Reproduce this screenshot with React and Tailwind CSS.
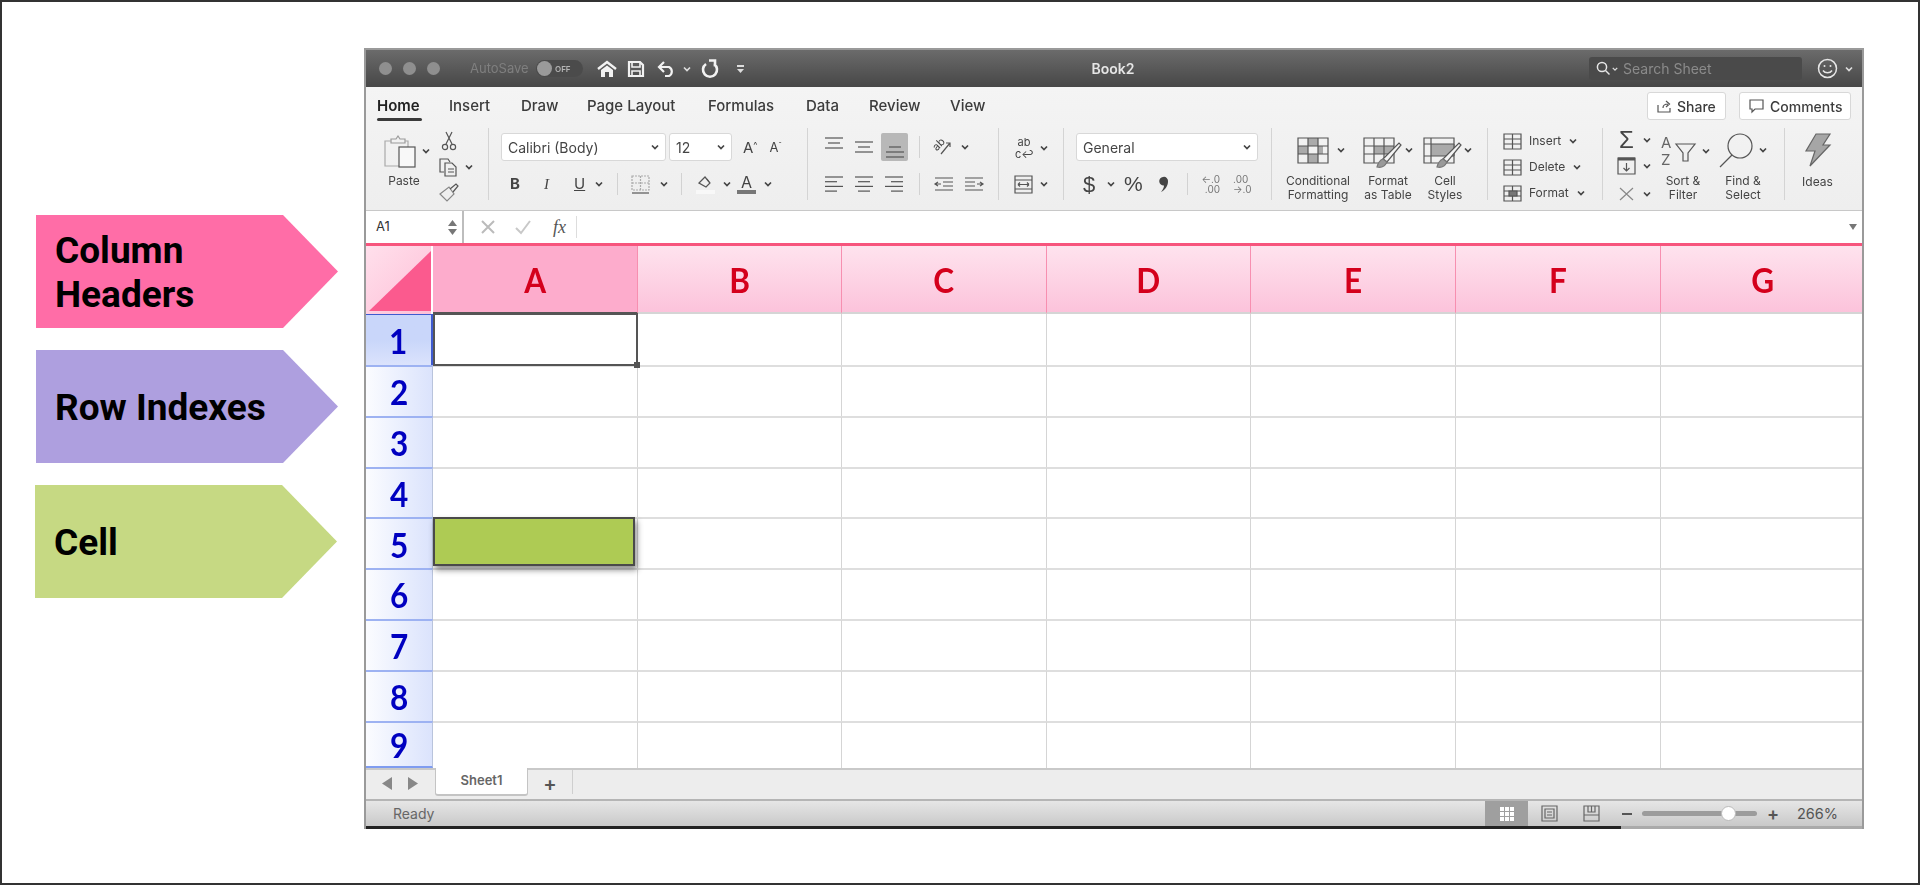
const I = ({ w, h, vb, children, className = "", sw = 1.2, c = "#555" }) => (
  <svg width={w} height={h} viewBox={vb || `0 0 ${w} ${h}`} fill="none" stroke={c} strokeWidth={sw} className={"shrink-0 overflow-visible " + className}>{children}</svg>
);
const Chev = ({ className = "", c = "#444" }) => (
  <I w={8} h={6} sw={1.7} c={c} className={className}><path d="M1 1.5 4 4.5 7 1.5" /></I>
);
const Sep = ({ className = "" }) => <div className={"w-px h-[22px] bg-[#d2d2d2] shrink-0 " + className} />;
const GroupSep = () => <div className="w-px h-[72px] mt-[5px] bg-[#d4d4d4] shrink-0 self-start" />;
const Lines = ({ ys, xs }) => (
  <I w={18} h={22}>{ys.map((y, i) => <path key={i} d={`M${xs[i][0]} ${y}H${xs[i][1]}`} />)}</I>
);
const Small = ({ children, className = "" }) => (
  <div className={"text-center text-[12px] leading-[14px] text-[#444] font-['Inter','Liberation_Sans',sans-serif] whitespace-nowrap " + className}>{children}</div>
);

const Arrow = ({ bg, children, className = "" }) => (
  <div className={"w-[302px] h-[113px] flex items-center pl-[19px] pt-[2px] text-[37px] leading-[44px] font-bold text-black font-['Roboto',sans-serif] [clip-path:polygon(0_0,247px_0,100%_50%,247px_100%,0_100%)] " + bg + " " + className}>
    <div>{children}</div>
  </div>
);

const COLS = ["A", "B", "C", "D", "E", "F", "G"];
const ROWS = [1, 2, 3, 4, 5, 6, 7, 8, 9];

function TitleBar() {
  return (
    <div className="h-[37px] bg-gradient-to-b from-[#6b6b6b] to-[#474747] flex items-center relative font-['Inter','Liberation_Sans',sans-serif] shrink-0">
      <div className="flex gap-[11px] ml-[13px]">
        <div className="w-[13px] h-[13px] rounded-full bg-[#8f8f8f]" />
        <div className="w-[13px] h-[13px] rounded-full bg-[#8f8f8f]" />
        <div className="w-[13px] h-[13px] rounded-full bg-[#8f8f8f]" />
      </div>
      <span className="ml-[30px] text-[13px] text-[#7f7f7f] w-[66px]">AutoSave</span>
      <div className="w-[47px] h-[17px] rounded-full bg-[#4b4b4b] flex items-center">
        <div className="w-[15px] h-[15px] rounded-full bg-[#9a9a9a] ml-px" />
        <span className="text-[8px] font-semibold text-[#b5b5b5] ml-[3px]">OFF</span>
      </div>
      <I w={22} h={18} c="#f2f2f2" sw={2.4} className="ml-[13px]"><path d="M2 9 11 2l9 7" /><path d="M5 10 11 5.500 17 10v7h-4v-5H9v5H5z" fill="#f2f2f2" stroke="none" /></I>
      <I w={18} h={18} c="#f2f2f2" sw={2.2} className="ml-[9px]"><path d="M2 2h11l3 3v11H2z" /><path d="M5 2v5h8V2M5 16v-5h8v5" strokeWidth="1.6" /></I>
      <I w={19} h={17} c="#f2f2f2" sw={2.2} className="ml-[12px]"><path d="M7 2 2 7l5 5M2 7h10a5 5 0 0 1 0 9H8" /></I>
      <Chev c="#ddd" className="ml-[7px]" />
      <I w={19} h={19} c="#f2f2f2" sw={2.6} className="ml-[9px]"><path d="M6 5a7 7 0 1 0 8 0M9 1.500h6v6" /></I>
      <div className="ml-[18px] flex flex-col items-center gap-[2px]">
        <div className="w-[7px] h-[2px] bg-[#ddd]" />
        <I w={7} h={4} c="#ddd" sw={0}><path d="M0 0h7L3.500 4z" fill="#ddd" /></I>
      </div>
      <span className="absolute left-[724px] w-[46px] text-center text-[14px] font-semibold text-[#e6e6e6]">Book2</span>
      <div className="ml-auto flex items-center mr-[9px]">
        <div className="w-[213px] h-[23px] rounded-[3px] bg-[#4a4a4a] flex items-center pl-[7px]">
          <I w={15} h={15} c="#e6e6e6" sw={1.5}><circle cx="6" cy="6" r="4.600" /><path d="m9.500 9.500 4 4" /></I>
          <Chev c="#ddd" className="scale-75" />
          <span className="ml-[4px] text-[14px] text-[#8b8b8b]">Search Sheet</span>
        </div>
        <I w={21} h={21} c="#e6e6e6" sw={1.5} className="ml-[15px]"><circle cx="10.500" cy="10.500" r="9" /><circle cx="7.500" cy="8" r="1" fill="#e6e6e6" stroke="none" /><circle cx="13.500" cy="8" r="1" fill="#e6e6e6" stroke="none" /><path d="M6 12.500c2 3 7 3 9 0" /></I>
        <Chev c="#ddd" className="ml-[7px]" />
      </div>
    </div>
  );
}

function Tabs() {
  const tabs = [["Home", "ml-[11px] w-[45px] font-semibold text-[#222]"], ["Insert", "ml-[27px] w-[49px]"], ["Draw", "ml-[23px] w-[40px]"], ["Page Layout", "ml-[26px] w-[95px]"], ["Formulas", "ml-[26px] w-[73px]"], ["Data", "ml-[25px] w-[38px]"], ["Review", "ml-[25px] w-[57px]"], ["View", "ml-[24px] w-[40px]"]];
  return (
    <div className="h-[36px] flex items-start relative font-['Inter','Liberation_Sans',sans-serif] text-[15px] font-medium text-[#3c3c3c]">
      {tabs.map(([t, c], i) => (
        <div key={t} className={"flex flex-col shrink-0 " + c}>
          <span className="mt-[9px] leading-[20px] whitespace-nowrap">{t}</span>
          {i === 0 && <div className="h-[3px] bg-[#3a3a3a] rounded-full mt-[2px]" />}
        </div>
      ))}
      <div className="ml-auto flex gap-[13px] mt-[5px] mr-[11px] text-[14px]">
        <div className="w-[79px] h-[28px] bg-white border border-[#d8d8d8] rounded-[3px] flex items-center pl-[9px] gap-[6px]">
          <I w={14} h={14}><path d="M1 6v7h12V9M6 9c0-3 2-4 5-4M9 2l3.500 3L9 8" /></I>
          <span>Share</span>
        </div>
        <div className="w-[112px] h-[28px] bg-white border border-[#d8d8d8] rounded-[3px] flex items-center pl-[9px] gap-[6px]">
          <I w={15} h={14}><path d="M1 1h13v9H6l-3 3v-3H1z" /></I>
          <span>Comments</span>
        </div>
      </div>
    </div>
  );
}

const Brush = () => (
  <g>
    <path d="M20 22 36 6l2 2-14 17z" fill="#f4f4f4" />
    <path d="M14 30c1-4 3-7 6-8l4 3c-2 4-6 6-10 5z" fill="#999" stroke="#777" />
  </g>
);

function Ribbon() {
  return (
    <div className="h-[87px] flex items-start font-['Inter','Liberation_Sans',sans-serif] text-[#444]">
      {/* Clipboard */}
      <div className="w-[122px] h-[75px] shrink-0 flex">
        <div className="ml-[18px] w-[52px] flex flex-col">
          <div className="flex items-center mt-[10px]">
            <I w={32} h={36}><path d="M7 6h5l2-3 2 3h5v4H7z" stroke="#9a9a9a" /><path d="M7 8H1v25h14" stroke="#aaa" /><path d="M21 8h3v6" stroke="#aaa" /><rect x="15" y="14" width="16" height="20" fill="#f8f8f8" stroke="#555" /></I>
            <Chev className="ml-[6px]" />
          </div>
          <Small className="w-[40px] mt-[5px]">Paste</Small>
        </div>
        <div className="flex flex-col mt-[8px] ml-[3px]">
          <I w={16} h={20} className="ml-[2px]"><path d="M11 1 5 13M5 1l6 12" /><circle cx="4" cy="16" r="2.600" /><circle cx="12" cy="16" r="2.600" /></I>
          <div className="flex items-center mt-[6px]">
            <I w={20} h={20}><path d="M5 15H1V2h8l2 3" /><path d="M6 6h7l4 4v9H6z" /><path d="M9 12h6M9 15h6" /></I>
            <Chev className="ml-[6px]" />
          </div>
          <I w={20} h={19} className="mt-[6px]"><path d="M1 11 10 4l5 7-7 7z" stroke="#888" /><path d="m11 6 6-5 2 2-5 6" /></I>
        </div>
      </div>
      <GroupSep />
      {/* Font */}
      <div className="w-[318px] shrink-0 flex flex-col">
        <div className="flex items-center mt-[10px]">
          <div className="ml-[12px] w-[165px] h-[28px] bg-white border border-[#d8d8d8] rounded-[3px] flex items-center justify-between px-[6px] text-[14px]"><span>Calibri (Body)</span><Chev /></div>
          <div className="ml-[3px] w-[63px] h-[28px] bg-white border border-[#d8d8d8] rounded-[3px] flex items-center justify-between px-[6px] text-[14px]"><span>12</span><Chev /></div>
          <span className="ml-[11px] text-[15px] leading-none">A<sup className="text-[9px]">^</sup></span>
          <span className="ml-[12px] text-[13px] leading-none">A<sup className="text-[8px]">ˇ</sup></span>
        </div>
        <div className="flex items-center mt-[13px] h-[20px] text-[15px]">
          <span className="ml-[21px] font-bold w-[12px]">B</span>
          <span className="ml-[22px] italic font-['Liberation_Serif',serif] w-[8px]">I</span>
          <span className="ml-[22px] underline w-[12px]">U</span>
          <Chev className="ml-[9px]" />
          <Sep className="ml-[14px]" />
          <I w={19} h={19} className="ml-[13px]" c="#aaa"><path d="M1 1h17v14H1zM9.500 1v14M1 8h17" strokeDasharray="2 1" /><path d="M1 18h17" stroke="#555" /></I>
          <Chev className="ml-[10px]" />
          <Sep className="ml-[13px]" />
          <I w={19} h={20} className="ml-[14px]"><path d="M3 9 9 3l5 6-4 4z" /><path d="m11 5 2 3" /><path d="M0 18h19" stroke="#f8f8f8" strokeWidth="4" /></I>
          <Chev className="ml-[8px]" />
          <div className="ml-[6px] w-[19px] flex flex-col items-center leading-none"><span className="text-[16px] leading-[15px]">A</span><div className="w-[19px] h-[4px] bg-[#777]" /></div>
          <Chev className="ml-[8px]" />
        </div>
      </div>
      <GroupSep />
      {/* Alignment */}
      <div className="w-[190px] shrink-0 flex flex-col">
        <div className="flex items-center mt-[10px] h-[28px]">
          <div className="ml-[17px]"><Lines ys={[2, 7, 12]} xs={[[0, 18], [3, 15], [0, 18]]} /></div>
          <div className="ml-[12px]"><Lines ys={[6, 11, 16]} xs={[[0, 18], [3, 15], [0, 18]]} /></div>
          <div className="ml-[8px] w-[27px] h-[28px] rounded-[2px] bg-[#b8b8b8] flex items-center justify-center"><Lines ys={[11, 16, 21]} xs={[[3, 15], [0, 18], [0, 18]]} /></div>
          <Sep className="ml-[11px]" />
          <div className="ml-[13px] w-[20px] h-[18px] relative shrink-0">
            <span className="absolute left-[-1px] top-[0px] text-[11px] leading-[12px] -rotate-45">ab</span>
            <I w={20} h={18} className="absolute inset-0"><path d="M8 16 17 5M13 5h4v4" /></I>
          </div>
          <Chev className="ml-[8px]" />
        </div>
        <div className="flex items-center mt-[13px] h-[20px]">
          {[[[0, 18], [0, 12], [0, 18], [0, 12]], [[0, 18], [3, 15], [0, 18], [3, 15]], [[0, 18], [6, 18], [0, 18], [6, 18]]].map((x, i) => (
            <I key={i} w={18} h={16} className={i === 0 ? "ml-[17px]" : "ml-[12px]"}>{x.map((p, j) => <path key={j} d={`M${p[0]} ${1 + j * 4.700}H${p[1]}`} />)}</I>
          ))}
          <Sep className="ml-[16px]" />
          <I w={18} h={15} className="ml-[15px]"><path d="M0 1h18M8 5h10M8 9h10M0 13h18M6 7H0M3 5 0 7l3 2" /></I>
          <I w={18} h={15} className="ml-[12px]"><path d="M0 1h18M0 5h10M0 9h10M0 13h18M12 7h6M15 5l3 2-3 2" /></I>
        </div>
      </div>
      <GroupSep />
      {/* Wrap */}
      <div className="w-[64px] shrink-0 flex flex-col">
        <div className="flex items-center mt-[13px] ml-[16px] h-[24px]">
          <div className="w-[18px] text-[11px] leading-[12px] text-center">ab<br />c↩</div>
          <Chev className="ml-[7px]" />
        </div>
        <div className="flex items-center mt-[14px] ml-[15px] h-[20px]">
          <I w={19} h={19}><path d="M1 1h17v17H1zM1 5h17M1 14h17M4 9.500h11M4 9.500l2-2M4 9.500l2 2M15 9.500l-2-2M15 9.500l-2 2" /></I>
          <Chev className="ml-[7px]" />
        </div>
      </div>
      <GroupSep />
      {/* Number */}
      <div className="w-[207px] shrink-0 flex flex-col">
        <div className="ml-[12px] mt-[10px] w-[182px] h-[28px] bg-white border border-[#d8d8d8] rounded-[3px] flex items-center justify-between px-[6px] text-[14px]"><span>General</span><Chev /></div>
        <div className="flex items-center mt-[13px] h-[20px]">
          <span className="ml-[19px] w-[14px] text-[22px] font-['Liberation_Sans',sans-serif]">$</span>
          <Chev className="ml-[10px]" />
          <span className="ml-[9px] w-[20px] text-[21px] font-['Liberation_Sans',sans-serif]">%</span>
          <I w={9} h={15} c="#444" sw={0} className="ml-[15px]"><path d="M4 0a4 4 0 0 1 5 4.500c0 4.500-3 8.500-7 10.500 2-2.500 3-4.500 3-6.500A4.200 4.200 0 0 1 4 0z" fill="#444" /></I>
          <Sep className="ml-[19px]" />
          <div className="ml-[13px] w-[19px] text-[10px] leading-[10px] text-right text-[#777]">←.0<br />.00</div>
          <div className="ml-[13px] w-[19px] text-[10px] leading-[10px] text-left text-[#777]">.00<br />→.0</div>
        </div>
      </div>
      <GroupSep />
      {/* Styles */}
      <div className="w-[215px] shrink-0 flex">
        <div className="w-[92px] flex flex-col shrink-0">
          <div className="flex items-center ml-[25px] h-[30px] mt-[12px]">
            <I w={32} h={27}>
              <path d="M11 1h10v8H11zM1 9h10v8H1zM11 17h10v9H11z" fill="#aaa" stroke="none" />
              <path d="M21 9h5v8h-5z" fill="#aaa" stroke="none" />
              <path d="M1 1h30v25H1zM1 9h30M1 17h30M11 1v25M21 1v25" />
            </I>
            <Chev className="ml-[8px]" />
          </div>
          <Small className="mt-[9px]">Conditional<br />Formatting</Small>
        </div>
        <div className="w-[60px] -ml-[6px] flex flex-col shrink-0">
          <div className="flex items-center ml-[5px] h-[30px] mt-[12px]">
            <I w={32} h={27}>
              <path d="M11 9h20v8H11z" fill="#aaa" stroke="none" />
              <path d="M1 1h30v25H1zM1 9h30M1 17h30M11 1v25M21 1v25" />
              <Brush />
            </I>
            <Chev className="ml-[10px]" />
          </div>
          <Small className="mt-[9px]">Format<br />as Table</Small>
        </div>
        <div className="w-[56px] -ml-[1px] flex flex-col shrink-0">
          <div className="flex items-center ml-[6px] h-[30px] mt-[12px]">
            <I w={32} h={27}>
              <path d="M8 7h24v12H8z" fill="#aaa" stroke="none" />
              <path d="M1 1h30v25H1zM1 7h30M1 19h30M8 1v25" />
              <Brush />
            </I>
            <Chev className="ml-[9px]" />
          </div>
          <Small className="mt-[9px]">Cell<br />Styles</Small>
        </div>
      </div>
      <GroupSep />
      {/* Cells */}
      <div className="w-[114px] shrink-0 flex flex-col text-[12px] mt-[9px] gap-[8px]">
        {["Insert", "Delete", "Format"].map((t, i) => (
          <div key={t} className="flex items-center h-[18px] ml-[15px]">
            <I w={19} h={17}><path d="M1 1h17v15H1zM1 6h17M1 11h17M9.500 1v15" />{i === 2 && <path d="M6 6h8v5H6z" fill="#777" />}</I>
            <span className="ml-[7px]">{t}</span>
            <Chev className="ml-[8px]" />
          </div>
        ))}
      </div>
      <GroupSep />
      {/* Editing */}
      <div className="w-[181px] shrink-0 flex">
        <div className="flex flex-col ml-[14px] w-[43px] shrink-0">
          <div className="flex items-center h-[18px] mt-[8px]"><span className="w-[19px] text-[24px] leading-[18px] font-['Liberation_Sans',sans-serif] text-center">Σ</span><Chev className="ml-[7px]" /></div>
          <div className="flex items-center h-[18px] mt-[8px]"><I w={19} h={18}><path d="M1 1h17v16H1z" /><path d="M1 2h17" strokeWidth="3" /><path d="M9.500 6v8M6.500 11l3 3 3-3" /></I><Chev className="ml-[7px]" /></div>
          <div className="flex items-center h-[18px] mt-[10px]"><I w={19} h={14} c="#888"><path d="M3 1 16 13M16 1 3 13" /></I><Chev className="ml-[7px]" /></div>
        </div>
        <div className="flex flex-col w-[58px] -ml-[6px] shrink-0">
          <div className="flex items-center ml-[7px] mt-[11px] h-[33px]">
            <div className="w-[14px] text-[15px] leading-[17px] text-[#666]">A<br />Z</div>
            <I w={21} h={20} className="mt-[3px]"><path d="M1 2h19l-7 9v8H8v-8z" /></I>
            <Chev className="ml-[6px]" />
          </div>
          <Small className="mt-[7px]">Sort &<br />Filter</Small>
        </div>
        <div className="flex flex-col w-[62px] shrink-0">
          <div className="flex items-center mt-[10px] h-[34px] ml-[7px]">
            <I w={34} h={34}><circle cx="21" cy="13" r="12" /><path d="M13 22 1 34" /></I>
            <Chev className="ml-[6px]" />
          </div>
          <Small className="mt-[7px]">Find &<br />Select</Small>
        </div>
      </div>
      <GroupSep />
      {/* Ideas */}
      <div className="flex-1 flex flex-col items-center pr-[12px]">
        <I w={28} h={34} c="#666" className="mt-[10px]"><path d="M12 1h14l-7 11h7L6 33l5-15H2z" fill="#a6a6a6" /></I>
        <Small className="mt-[8px]">Ideas</Small>
      </div>
    </div>
  );
}

function FormulaBar() {
  return (
    <div className="h-[33px] flex items-stretch bg-white border-t border-[#c8c8c8] shrink-0 font-['Inter','Liberation_Sans',sans-serif]">
      <div className="w-[98px] border-r-2 border-[#bdbdbd] flex items-center justify-between pl-[10px] pr-[5px] text-[13px] text-[#333]">
        <span>A1</span>
        <div className="flex flex-col gap-[3px]">
          <I w={9} h={6} sw={0}><path d="M0 6 4.500 0 9 6z" fill="#777" /></I>
          <I w={9} h={6} sw={0}><path d="M0 0 4.500 6 9 0z" fill="#777" /></I>
        </div>
      </div>
      <div className="flex items-center flex-1">
        <I w={14} h={14} c="#bbb" sw={2} className="ml-[17px]"><path d="m1 1 12 12M13 1 1 13" /></I>
        <I w={16} h={14} c="#c8c8c8" sw={2} className="ml-[20px]"><path d="m1 8 5 5 9-12" /></I>
        <span className="ml-[22px] w-[18px] italic text-[18px] font-['Liberation_Serif',serif] text-[#555]">fx</span>
        <div className="w-px h-[22px] bg-[#ddd] ml-[5px]" />
        <I w={8} h={6} sw={0} className="ml-auto mr-[5px]"><path d="M0 0h8L4 6z" fill="#777" /></I>
      </div>
    </div>
  );
}

function Grid() {
  const big = "inline-block scale-x-90 font-['Lato',sans-serif] font-bold text-[35px]";
  return (
    <div className="flex-1 flex flex-col min-h-0 overflow-hidden">
      <div className="h-[71px] border-t-[3px] border-[#f7557d] flex shrink-0 relative">
        <div className="w-[67px] shrink-0 bg-gradient-to-br from-[#ffe0ec] to-[#fdbfd7] border-r-2 border-white flex items-end justify-end pb-[3px]">
          <I w={62} h={60} sw={0}><path d="M62 0V60H0z" fill="#fb5a8e" /></I>
        </div>
        {COLS.map((c, i) => (
          <div key={c} className={"w-[204.600px] shrink-0 flex items-center justify-center text-[#d4001c] border-r border-[#f78fb0] border-b-2 " + (i === 0 ? "bg-[#fdaccc] border-b-[#555]" : "bg-gradient-to-b from-[#fee3ee] to-[#fcc3db] border-b-[#d5d5d5]")}><span className={big}>{c}</span></div>
        ))}
      </div>
      {ROWS.map((r, i) => (
        <div key={r} className={"flex shrink-0 " + (i === 0 ? "h-[51px]" : i === 8 ? "h-[47.500px]" : "h-[50.800px]")}>
          <div className={"w-[67px] shrink-0 flex items-center justify-center text-[#0000c0] " + (i === 0 ? "bg-gradient-to-b from-[#c9d6fa] via-[#c9d6fa] to-[#dbe3fc] border-t border-r-2 border-[#3f5bd0]" : i === 8 ? "bg-gradient-to-r from-[#fbfcff] to-[#dbe3fc] border-t-2 border-t-[#9db2f2] border-b-2 border-b-[#7f9cf0] border-r border-r-[#b9c4dc]" : "bg-gradient-to-r from-[#fbfcff] to-[#dbe3fc] border-t-2 border-t-[#9db2f2] border-r border-r-[#b9c4dc]")}><span className={big}>{r}</span></div>
          {COLS.map((c, j) => (
            <div key={c} className={"w-[204.600px] shrink-0 border-r border-[#d5d5d5] " + (i === 0 ? "" : "border-t-2 border-t-[#dedede] ") + (j === 0 && (i === 0 || i === 4) ? "relative" : "")}>
              {j === 0 && i === 0 && (
                <div className="absolute -top-px left-0 -right-px -bottom-[1px] border-2 border-[#555]">
                  <div className="absolute -right-[4px] -bottom-[4px] w-[6px] h-[6px] bg-[#555]" />
                </div>
              )}
              {j === 0 && i === 4 && (
                <div className="absolute -top-[2px] left-0 right-[2px] bottom-[2px] bg-[#aecb54] border-2 border-[#4a4a4a] shadow-[2px_4px_6px_rgba(0,0,0,0.45)]" />
              )}
            </div>
          ))}
        </div>
      ))}
    </div>
  );
}

function Footer() {
  return (
    <div className="shrink-0 font-['Inter','Liberation_Sans',sans-serif]">
      <div className="h-[31px] bg-[#ededed] border-t-2 border-[#c9c9c9] flex items-stretch">
        <div className="flex items-center ml-[16px] gap-[16px] mt-[-2px]">
          <I w={10} h={13} sw={0}><path d="M10 0V13L0 6.500z" fill="#888" /></I>
          <I w={10} h={13} sw={0}><path d="M0 0V13L10 6.500z" fill="#888" /></I>
        </div>
        <div className="ml-[17px] mt-[-2px] w-[93px] h-[28px] bg-white rounded-b-[3px] border-x border-b-2 border-[#c4c4c4] flex items-center justify-center text-[13px] font-semibold text-[#666]">Sheet1</div>
        <div className="w-[44px] flex items-center justify-center text-[20px] font-semibold text-[#555] leading-none pb-[2px]">+</div>
        <div className="w-px h-[24px] bg-[#cfcfcf]" />
      </div>
      <div className="h-[27px] bg-gradient-to-b from-[#e6e6e6] to-[#c9c9c9] border-t-2 border-[#b5b5b5] flex items-center text-[14px] text-[#666]">
        <span className="ml-[27px]">Ready</span>
        <div className="ml-auto h-full w-[43px] bg-[#9f9f9f] flex items-center justify-center">
          <I w={16} h={16} sw={0}>{[1, 6, 11].flatMap((x) => [1, 6, 11].map((y) => <rect key={x + "-" + y} x={x} y={y} width="4" height="4" fill="#fff" />))}</I>
        </div>
        <I w={17} h={17} c="#666" className="ml-[13px]"><path d="M1 1h15v15H1zM4 4h9v9H4zM6 7h5M6 10h5" /></I>
        <I w={17} h={17} c="#666" className="ml-[25px]"><path d="M1 1h15v15H1zM1 10h15M5 1v6h7V1M8.500 1v6" /></I>
        <div className="ml-[22px] w-[10px] h-[2px] bg-[#555]" />
        <div className="ml-[10px] w-[115px] h-[5px] rounded-full bg-[#9c9c9c] relative">
          <div className="absolute left-[79px] -top-[5px] w-[15px] h-[15px] rounded-full bg-white border border-[#bbb]" />
        </div>
        <span className="ml-[10px] w-[10px] text-[18px] font-semibold text-[#555] leading-none">+</span>
        <span className="ml-[20px] mr-[27px] w-[38px] whitespace-nowrap text-[14.500px] text-[#555]">266%</span>
      </div>
      <div className="h-[3px] flex">
        <div className="w-[1255px] bg-[#222]" />
        <div className="flex-1 bg-[#aaa]" />
      </div>
    </div>
  );
}

export default function App() {
  return (
    <div className="w-[1920px] h-[885px] bg-white border-2 border-[#333] flex overflow-hidden">
      <div className="w-[362px] shrink-0 flex flex-col pt-[213px] pl-[34px] gap-[22px]">
        <Arrow bg="bg-[#ff6da7]">Column<br />Headers</Arrow>
        <Arrow bg="bg-[#ae9fdf]">Row Indexes</Arrow>
        <Arrow bg="bg-[#c6d983]" className="-ml-[1px]">Cell</Arrow>
      </div>
      <div className="w-[1500px] h-[781px] mt-[46px] border-x-2 border-t-2 border-[#9a9a9a] flex flex-col bg-white shrink-0">
        <div className="blur-[0.4px] shrink-0">
          <TitleBar />
          <div className="bg-gradient-to-b from-[#f4f4f4] to-[#eeeeee]">
            <Tabs />
            <Ribbon />
          </div>
        </div>
        <FormulaBar />
        <Grid />
        <Footer />
      </div>
    </div>
  );
}
